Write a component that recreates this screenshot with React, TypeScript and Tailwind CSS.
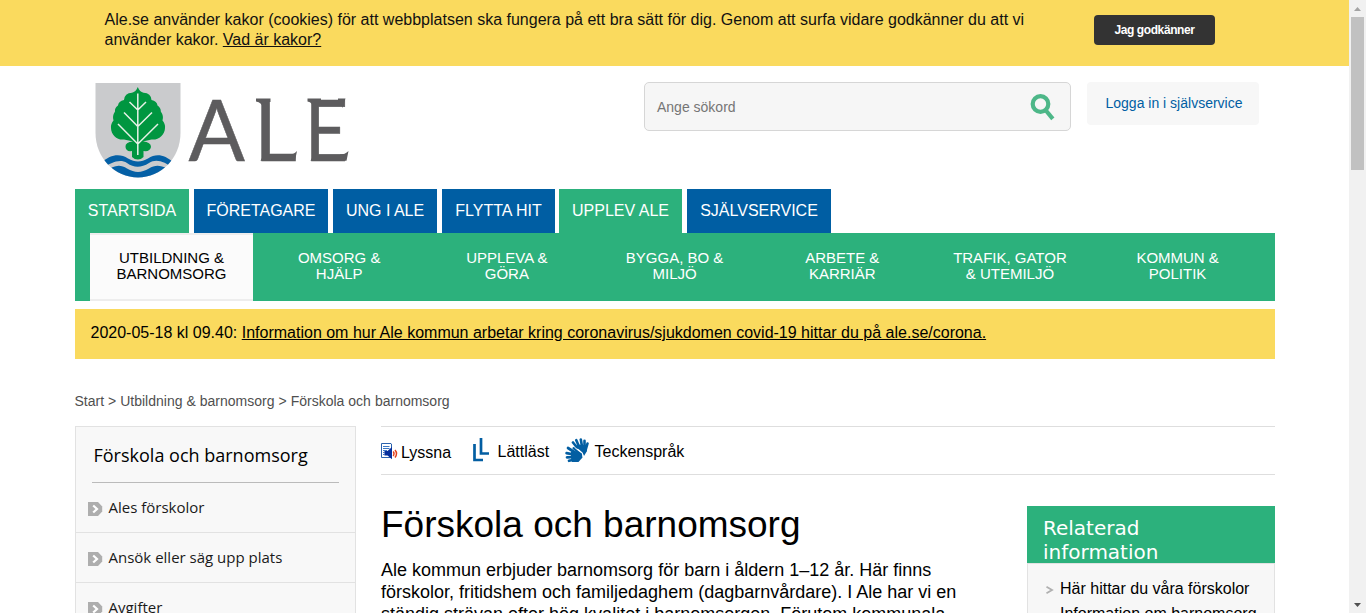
import React from "react";

type Tab = { label: string; width: string; green?: boolean };

const tabs: Tab[] = [
  { label: "STARTSIDA", width: "w-[114px] mr-[5px]", green: true },
  { label: "FÖRETAGARE", width: "w-[134px] mr-[5px]" },
  { label: "UNG I ALE", width: "w-[104px] mr-[5px]" },
  { label: "FLYTTA HIT", width: "w-[113px] mr-[4px]" },
  { label: "UPPLEV ALE", width: "w-[123px] mr-[5px]", green: true },
  { label: "SJÄLVSERVICE", width: "w-[144px]" },
];

const sections: [string, string][] = [
  ["UTBILDNING &", "BARNOMSORG"],
  ["OMSORG &", "HJÄLP"],
  ["UPPLEVA &", "GÖRA"],
  ["BYGGA, BO &", "MILJÖ"],
  ["ARBETE &", "KARRIÄR"],
  ["TRAFIK, GATOR", "& UTEMILJÖ"],
  ["KOMMUN &", "POLITIK"],
];

function Logo() {
  return (
    <svg width="290" height="107" viewBox="0 0 290 107" className="block overflow-visible" role="img" aria-label="Ale">
      <defs>
        <clipPath id="shield">
          <path d="M0.5 1H85.500V51C85.500 76 66 95.500 43 95.500S.5 76 .5 51Z" />
        </clipPath>
      </defs>
      <g clipPath="url(#shield)">
        <rect width="87" height="97" fill="#cacbcd" />
        <path
          d="M6 81C16 72 25 71.500 33 76.500C40 80.500 46 80.500 53 76.500C61 71.500 69 72 79 81V87C69 79 61 76.500 54 81C46 86 39 86 32 81C25 76.500 17 80 6 87Z"
          fill="#0460a6"
        />
        <path d="M10 90C19 83 25 82 32 86.500C40 91 46 91 54 86.500C61 82 68 83 78 90V100H10Z" fill="#0460a6" />
      </g>
      <path
        d="M42.800 5C44 8.500 46 10 48.500 10.700Q56 11 56.500 18Q62 19 62.500 23.500Q66 26 65.800 29.500Q69 34 67.500 38.500Q70.500 42 70 46C70 53 63 58.500 56.500 57.500Q52 58.500 48 59.500Q56 60 56 65Q55 70 48.500 69V75Q46 77.500 42.800 77.500T37 75V69Q31 70 30.500 65Q30 60 38 59.500Q34 58.500 29 57.500C22.500 58.500 16 53 16 46Q15.500 42 18.500 38.500Q17 34 20 29.500Q19.500 26 23 23.500Q23.500 19 29 18Q29.500 11 37 10.700C39.500 10 41.500 8.500 42.800 5Z"
        fill="#009640"
      />
      <path
        d="M42.800 11.500V73M34.500 20L42.800 28L51 20M29 30.500L42.800 44.500L57 30.500M23 42L42.800 62L63 42"
        fill="none"
        stroke="#e6f1e6"
        strokeWidth="1.500"
      />
      <g fill="#5d5c5e" stroke="#5d5c5e" strokeWidth=".5" className="text-[86px] [font-family:'Lato',sans-serif]">
        <text transform="translate(93.500 78.500) scale(.97 1)">A</text>
        <text transform="translate(159 78.500) scale(.97 1)">L</text>
        <text transform="translate(209.500 78.500) scale(.88 1)">E</text>
      </g>
      {/* flared stroke ends of the wordmark */}
      <g fill="#5d5c5e">
        <path d="M161 16.500H175.500V20H168V26Q167 20.500 161 19.500Z" />
        <path d="M165.500 78.800L168 74H172V78.800Z" />
        <path d="M194 72.500Q199 72.500 202 69L200 78.800H194Z" />
        <path d="M212.500 16.500H226V20H218V26Q218 20.500 212.500 19.500Z" />
        <path d="M215.500 78.800L218 74H222V78.800Z" />
        <path d="M243 22.500Q247 22.500 247.500 26L250.500 16.500H243Z" />
        <path d="M245 72.500Q250 72.500 253.500 69L251.500 78.800H245Z" />
      </g>
    </svg>
  );
}

function Bullet() {
  return (
    <svg width="15" height="14" viewBox="0 0 15 14" className="mr-[5.500px] mt-[2px] shrink-0">
      <path d="M0 0H10L14.200 4.500V9.500L10 14H0Z" fill="#aeaeae" />
      <path d="M5.200 3.500L9 7L5.200 10.500" fill="none" stroke="#fff" strokeWidth="2.200" />
    </svg>
  );
}

function ListenIcon() {
  return (
    <svg width="17" height="17" viewBox="0 0 17 17" className="shrink-0">
      <path d="M.5 .5H10L10.500 1V14.500H.5Z" fill="#fff" stroke="#2b62ad" />
      <path d="M2 3.500H8.500M2 5.500H8.500M2 7.500H6M2 9.500H3.500M2 11.500H3.500" stroke="#3d78c4" />
      <path d="M3.500 8H6.500L11 4V16.200L6.500 12.500H3.500Z" fill="#062f9c" />
      <path d="M12.200 8.500Q13.800 10.500 12.200 13M14 7Q17 10.500 14 14.500" fill="none" stroke="#e2401c" strokeWidth="1.500" />
    </svg>
  );
}

function HandsIcon() {
  return (
    <svg width="24" height="25" viewBox="0 0 24 25">
      <g stroke="#035ea2" strokeLinecap="round" fill="none">
        <path
          d="M12 9.500L8 4.500M14 8.500L11.300 2.200M17 8.500L15.800 1.500M19.500 10L19.500 2.800M20.500 12.500L22.500 5.500"
          strokeWidth="2.600"
        />
        <path d="M10 14.500L3 10M9 16.500L1.600 15.200M9 19L2 19.300M10 21.500L4 22.800" strokeWidth="2.700" />
        <path d="M14 15L8.500 10.200" strokeWidth="2.200" />
      </g>
      <path d="M10.500 9L13 6.500L20.500 7.500L22 13L19 18L17.500 14.500L14 11.500Z" fill="#035ea2" />
      <path d="M6 13.500L10.500 13.500L14 13.500L17 15.500L17.500 19.500L13.500 24H7L6 20Z" fill="#035ea2" />
      <path d="M10.200 9.800L14.500 13L17.300 15.200L18.300 19" stroke="#fff" strokeWidth=".8" fill="none" />
    </svg>
  );
}

function SideItem({ label }: { label: string }) {
  return (
    <li className="flex h-[50px] items-start border-b border-[#e2e2e2] pl-3 pt-[17px]">
      <Bullet />
      <a className="-mt-px text-[15px] leading-[16px] text-[#1a1a1a]">{label}</a>
    </li>
  );
}

export default function App() {
  return (
    <div className="flex h-[613px] w-[1366px] overflow-hidden bg-white text-black [font-family:'Liberation_Sans',Arial,sans-serif]">
      <div className="h-full w-[1349px] shrink-0 overflow-hidden">
        <div className="flex h-[66px] items-start bg-[#fada5e] pl-[104.500px] text-[16px] leading-[20px] text-[#111]">
          <p className="w-[989.500px] whitespace-nowrap pt-[10px]">
            Ale.se använder kakor (cookies) för att webbplatsen ska fungera på ett bra sätt för dig. Genom att surfa
            vidare godkänner du att vi
            <br />
            använder kakor. <a className="underline">Vad är kakor?</a>
          </p>
          <button className="mt-[15px] h-[30px] w-[121px] rounded-[4px] bg-[#333] text-[12px] font-bold tracking-[-0.4px] text-white">
            Jag godkänner
          </button>
        </div>

        <div className="ml-[75px] w-[1200px]">
          <header className="flex h-[123px] items-start pt-4">
            <div className="ml-5 w-[549px]">
              <Logo />
            </div>
            <div className="flex h-[49px] w-[427px] items-center justify-between rounded-[5px] border border-[#d6d6d6] bg-[#f6f6f6] pl-3 pr-[14px] text-[14px] text-[#757575]">
              <span className="pt-[2px]">Ange sökord</span>
              <svg width="27" height="28" viewBox="0 0 27 28">
                <circle cx="11.500" cy="11" r="7.800" fill="none" stroke="#4db788" strokeWidth="4.200" />
                <path d="M16.500 17L23.800 25.800" stroke="#4db788" strokeWidth="4.200" />
              </svg>
            </div>
            <a className="ml-4 flex h-[43px] w-[172px] items-center justify-center rounded-[4px] bg-[#f7f7f7] pl-[2px] text-[14px] text-[#005ea3]">
              Logga in i självservice
            </a>
          </header>

          <nav>
            <div className="flex h-[44px] text-[16px] text-white">
              {tabs.map((t) => (
                <a
                  key={t.label}
                  className={`flex items-center justify-center whitespace-nowrap ${t.width} ${t.green ? "bg-[#2cb17c]" : "bg-[#005ea3]"}`}
                >
                  {t.label}
                </a>
              ))}
            </div>
            <div className="flex h-[68px] gap-[4.700px] bg-[#2cb17c] pl-[15px] text-center text-[15px] leading-[16px] text-white">
              {sections.map(([a, b], i) => (
                <a
                  key={a}
                  className={`w-[163px] shrink-0 border-y-2 pt-[15px] ${i === 0 ? "border-[#ededed] bg-[#fbfbfb] text-black" : "border-transparent"}`}
                >
                  {a}
                  <br />
                  {b}
                </a>
              ))}
            </div>
          </nav>

          <div className="mt-2 h-[50px] bg-[#fada5e] pl-[15.500px] pt-[14px] text-[16px] leading-[20px]">
            2020-05-18 kl 09.40:{" "}
            <a className="underline">
              Information om hur Ale kommun arbetar kring coronavirus/sjukdomen covid-19 hittar du på ale.se/corona.
            </a>
          </div>

          <div className="-ml-[0.5px] mt-[33px] h-[34px] text-[14px] leading-[18px] text-[#4f4f4f] [word-spacing:0.100px]">
            Start &gt; Utbildning &amp; barnomsorg &gt; Förskola och barnomsorg
          </div>

          <div className="flex items-start">
            <aside className="mr-[25px] h-[240px] w-[281px] border border-[#e2e2e2] bg-[#f8f8f8] [font-family:'Open_Sans',sans-serif]">
              <h2 className="ml-4 h-[56px] w-[247px] border-b border-[#bbb] pl-[1.500px] pt-4 text-[18px] leading-[24px]">
                Förskola och barnomsorg
              </h2>
              <ul>
                <SideItem label="Ales förskolor" />
                <SideItem label="Ansök eller säg upp plats" />
                <SideItem label="Avgifter" />
              </ul>
            </aside>

            <main className="w-[894px]">
              <div className="flex h-[49px] items-start border-y border-[#dedede] text-[16px] leading-[20px]">
                <div className="flex w-[91px] items-start pt-4">
                  <ListenIcon />
                  <span className="ml-[3px]">Lyssna</span>
                </div>
                <div className="flex w-[93px] pt-[11px]">
                  <svg width="18" height="24" viewBox="0 0 18 24">
                    <path d="M2.500 6V22H11M9 0V15.500H17" fill="none" stroke="#035ea2" strokeWidth="2.700" />
                  </svg>
                  <span className="ml-[7.500px] pt-[4px]">Lättläst</span>
                </div>
                <div className="flex pt-[11px]">
                  <HandsIcon />
                  <span className="ml-[5.500px] pt-[4px]">Teckenspråk</span>
                </div>
              </div>
              <div className="flex pt-[31px]">
                <article className="w-[646px]">
                  <h1 className="text-[37px] leading-[37px]">Förskola och barnomsorg</h1>
                  <p className="mt-4 whitespace-nowrap text-[18px] leading-[22px]">
                    Ale kommun erbjuder barnomsorg för barn i åldern 1–12 år. Här finns
                    <br />
                    förskolor, fritidshem och familjedaghem (dagbarnvårdare). I Ale har vi en
                    <br />
                    ständig strävan efter hög kvalitet i barnomsorgen. Förutom kommunala
                  </p>
                </article>
                <section className="w-[248px]">
                  <h2 className="h-[57px] bg-[#2cb17c] pl-4 pt-[10px] text-[20px] leading-[24px] text-white [font-family:'DejaVu_Sans',Verdana,sans-serif]">
                    Relaterad
                    <br />
                    information
                  </h2>
                  <ul className="h-[80px] border border-[#e2e2e2] bg-[#f7f7f7] pl-[32px] pt-3 text-[16px] leading-[25px]">
                    <li className="relative whitespace-nowrap">
                      <svg width="8" height="8" viewBox="0 0 8 8" className="absolute -left-[14px] top-[10px]">
                        <path d="M.5 .8L6 4L.5 7.200" fill="none" stroke="#b0b0b0" strokeWidth="1.800" />
                      </svg>
                      Här hittar du våra förskolor
                    </li>
                    <li className="whitespace-nowrap">Information om barnomsorg</li>
                  </ul>
                </section>
              </div>
            </main>
          </div>
        </div>
      </div>

      <div className="flex w-[17px] shrink-0 flex-col items-center bg-[#f1f1f1]">
        <div className="flex h-[17px] items-center">
          <svg width="7" height="4" viewBox="0 0 7 4">
            <path d="M0 4L3.500 0L7 4Z" fill="#a3a3a3" />
          </svg>
        </div>
        <div className="h-[153px] w-[13px] bg-[#c1c1c1]" />
        <div className="mt-auto flex h-[17px] items-center">
          <svg width="7" height="4" viewBox="0 0 7 4">
            <path d="M0 0L3.500 4L7 0Z" fill="#505050" />
          </svg>
        </div>
      </div>
    </div>
  );
}
